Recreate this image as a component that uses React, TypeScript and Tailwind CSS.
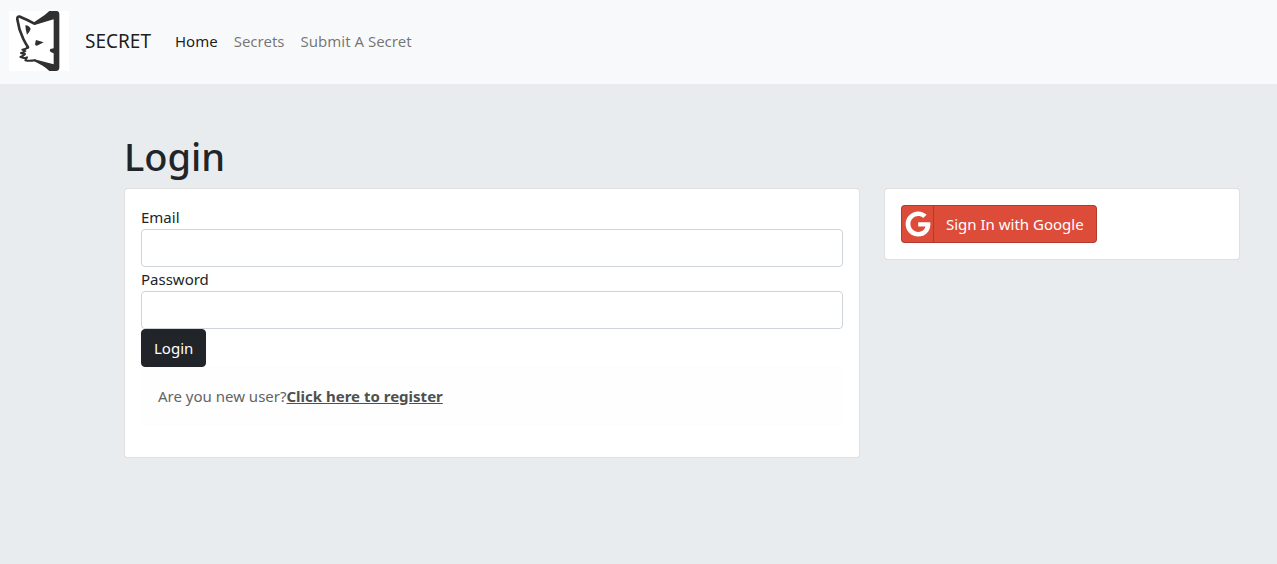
import { FaGoogle } from "react-icons/fa";

function FoxLogo() {
  return (
    <svg viewBox="27 33 180 180" className="size-15 shrink-0 bg-white" role="img" aria-label="Secret">
      <g fill="#303030">
        <path d="M102 67 L134 45 Q143 38 148 33 L170 33 Q178 34 178 43 L178 204 Q177 213 168 213 L148 213 Q141 205 128 197 L103 184 L103 178 L161 193 L161 160 L152 156 Q147 151 151 147 L161 145 L161 58 L104 75 Z" />
        <path d="M76 76 Q88 77 92 87 Q88 98 81 104 Q77 92 76 76 Z" />
        <path d="M108 120 L131 127 L114 136 Q106 139 105 132 Z" />
      </g>
      <g fill="none" stroke="#303030" strokeLinecap="round" strokeLinejoin="round">
        <path
          d="M103 71 Q80 58 60 50 Q51 48 52 58 Q56 88 70 117 Q78 133 84 142"
          strokeWidth="8"
        />
        <path
          d="M84 142 Q76 148 67 149 Q71 153 76 153 Q70 158 63 159 Q69 163 75 162 Q69 169 61 171 Q70 176 81 172 L76 181 Q86 184 105 181"
          strokeWidth="6"
        />
      </g>
    </svg>
  );
}

function Field({ id, label, type }: { id: string; label: string; type: string }) {
  return (
    <div>
      <label htmlFor={id} className="block">
        {label}
      </label>
      <input
        id={id}
        name={id}
        type={type}
        className="block h-[38px] w-full rounded border border-[#ced4da] bg-white px-3"
      />
    </div>
  );
}

export default function App() {
  return (
    <div className="min-h-screen bg-[#e9ecef] font-['Noto_Sans','Open_Sans',sans-serif] text-[15px]/6 text-[#212529]">
      <nav className="flex items-center bg-[#f8f9fa] pt-[11px] pr-4 pb-[13px] pl-[9px]">
        <FoxLogo />
        <a href="#" className="ml-4 text-[19px]/7 text-black/90">
          SECRET
        </a>
        <div className="ml-6 flex gap-4">
          <a href="#" className="text-black/90">
            Home
          </a>
          <a href="#" className="text-black/55">
            Secrets
          </a>
          <a href="#" className="text-black/55">
            Submit A Secret
          </a>
        </div>
      </nav>

      <main className="pt-12 pr-[25px] pl-28">
        <h1 className="mb-2 px-3 text-[38px]/12 font-medium">Login</h1>
        <div className="flex items-start">
          <div className="w-2/3 px-3">
            <form className="rounded border border-black/12 bg-white p-4">
              <Field id="email" label="Email" type="email" />
              <Field id="password" label="Password" type="password" />
              <button
                type="submit"
                className="block h-[38px] rounded border border-[#212529] bg-[#212529] px-3 text-white"
              >
                Login
              </button>
              <p className="mb-4 rounded border border-[#fdfdfe] bg-[#fefefe] p-4 text-[#636464]">
                Are you new user?
                <a href="#" className="font-bold text-[#4f5050] underline">
                  Click here to register
                </a>
              </p>
            </form>
          </div>
          <div className="w-1/3 px-3">
            <div className="rounded border border-black/12 bg-white p-4">
              <button
                type="button"
                className="flex h-[38px] items-stretch overflow-hidden rounded border border-black/20 bg-[#dd4b39] text-white"
              >
                <span className="flex w-8 items-center justify-center border-r border-black/20">
                  <FaGoogle size={26} aria-hidden="true" />
                </span>
                <span className="self-center px-3">Sign In with Google</span>
              </button>
            </div>
          </div>
        </div>
      </main>
    </div>
  );
}
